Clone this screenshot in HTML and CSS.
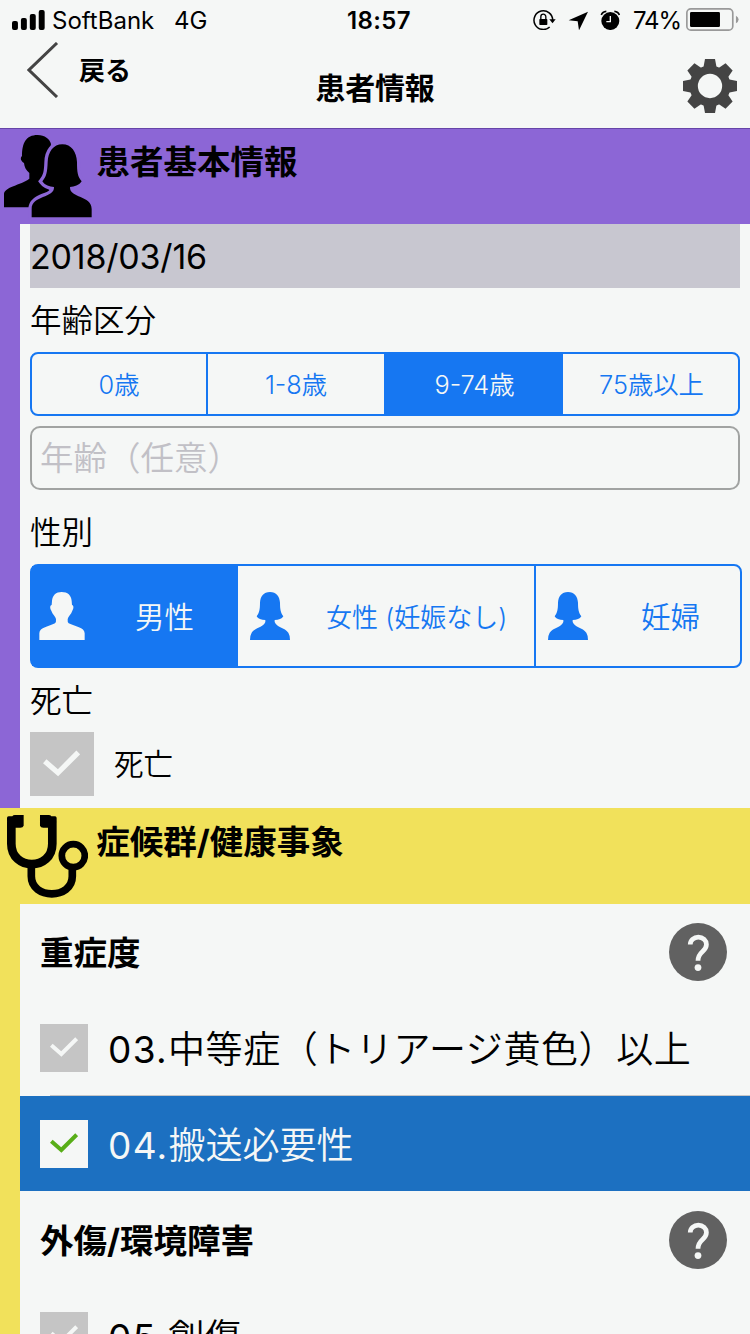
FILE: index.html
```html
<!DOCTYPE html>
<html lang="ja">
<head>
<meta charset="utf-8">
<title>患者情報</title>
<link rel="stylesheet" href="styles.css">
</head>
<body>
<svg class="defs" width="0" height="0">
  <symbol id="female" viewBox="0 0 120 144"><path d="M60 0C79 0 89 13 90 32C90 52 92 62 100 73C96 81 86 84 74 84V90C80 107 104 106 115 122Q120 130 120 144H0Q0 130 5 122C16 106 40 107 46 90V84C34 84 24 81 20 73C28 62 30 52 30 32C31 13 41 0 60 0Z"/></symbol>
  <symbol id="male" viewBox="0 0 136 144"><path d="M67 0C85 0 96 10 97 27L98 39C104 40 103 50 99 56C96 66 86 74 85 81Q84 90 88 94C106 103 136 106 136 124V144H0V124C0 106 30 103 47 94Q51 90 50 81C49 74 39 66 36 56C32 50 31 40 37 39L38 27C39 10 50 0 67 0Z"/></symbol>
  <symbol id="check" viewBox="0 0 84 60"><path d="M4 25L34 51L80 5" fill="none" stroke="currentColor" stroke-width="12"/></symbol>
  <symbol id="help" viewBox="0 0 172 172"><circle cx="86" cy="86" r="86" fill="#616161"/><path d="M63 64A24 22 0 0 1 111 64C111 86 86 84 86 112" fill="none" stroke="#f5f7f6" stroke-width="14"/><circle cx="86" cy="132" r="10" fill="#f5f7f6"/></symbol>
</svg>
<header class="top">
  <div class="status">
    <svg class="signal" viewBox="0 0 100 60"><rect y="33" width="18" height="27" rx="6"/><rect x="27" y="24" width="18" height="36" rx="6"/><rect x="54" y="12" width="18" height="48" rx="6"/><rect x="81" width="18" height="60" rx="6"/></svg>
    <span class="carrier">SoftBank</span><span class="network">4G</span>
    <span class="clock">18:57</span>
    <svg class="indicators" viewBox="0 0 264 62">
      <path d="M59 31A28 28 0 1 0 50 51" fill="none" stroke="#000" stroke-width="4.500"/><path d="M49 28H68L58.500 40Z"/><rect x="19" y="27" width="24" height="18" rx="2"/><path d="M23.500 28V20a7.500 7.500 0 0 1 15 0V28" fill="none" stroke="#000" stroke-width="4"/>
      <path d="M165 5L107 31L134 34L138 61Z"/>
      <circle cx="232" cy="33" r="27"/><path d="M232 18V35H220" fill="none" stroke="#f5f7f6" stroke-width="4"/><path d="M205 15Q208 5 220 4M244 4Q256 5 259 15" fill="none" stroke="#000" stroke-width="5"/>
    </svg>
    <span class="percent">74%</span>
    <svg class="battery" viewBox="0 0 160 70"><rect x="2.500" y="2.500" width="138" height="64" rx="12" fill="none" stroke="#999" stroke-width="5"/><rect x="12" y="12" width="90" height="45" rx="4"/><path d="M150 23Q158 28 158 34.500T150 46Z" fill="#999"/></svg>
  </div>
  <nav class="nav">
    <div class="back"><svg class="chevron" viewBox="0 0 32 56"><path d="M30 1L2 28L30 55" fill="none" stroke="#444" stroke-width="3"/></svg><span class="back-label">戻る</span></div>
    <h1 class="title">患者情報</h1>
    <svg class="gear" viewBox="-81 -81 162 162">
      <g fill="#444"><g id="teeth"><path id="tooth" d="M-15 -81H15L20 -55H-20Z"/><use href="#tooth" transform="rotate(45)"/><use href="#tooth" transform="rotate(90)"/><use href="#tooth" transform="rotate(135)"/></g><use href="#teeth" transform="rotate(180)"/></g>
      <circle r="49" fill="none" stroke="#444" stroke-width="25"/>
    </svg>
  </nav>
</header>
<main>
  <section class="section basic">
    <div class="section-head">
      <svg class="users" viewBox="0 0 264 248"><path d="M101 0C122 0 138 12 141 27L130 90L125 145L138 168L100 192L78 217H0V178C0 155 50 151 76 131V114C66 105 61 96 60 84C50 78 48 68 54 63C54 25 65 0 101 0Z"/><path class="front" d="M175 28C202 28 218 51 219 81C219 112 221 125 233 139C224 152 212 155 198 156C196 190 263 180 263 222V247H83V222C83 180 152 190 150 156C136 155 124 152 115 139C127 125 130 112 131 81C132 51 148 28 175 28Z"/></svg>
      <h2 class="section-title">患者基本情報</h2>
    </div>
    <div class="section-body">
      <div class="date">2018/03/16</div>
      <div class="label">年齢区分</div>
      <div class="ages"><span>0歳</span><span>1-8歳</span><span class="selected">9-74歳</span><span>75歳以上</span></div>
      <div class="age-input">年齢（任意）</div>
      <div class="label sex-label">性別</div>
      <div class="sexes">
        <div class="sex man selected"><svg class="sex-icon"><use href="#male"/></svg><span>男性</span></div>
        <div class="sex woman"><svg class="sex-icon"><use href="#female"/></svg><span>女性 (妊娠なし)</span></div>
        <div class="sex pregnant"><svg class="sex-icon"><use href="#female"/></svg><span>妊婦</span></div>
      </div>
      <div class="label">死亡</div>
      <div class="death"><div class="box large"><svg><use href="#check"/></svg></div><span>死亡</span></div>
    </div>
  </section>
  <section class="section syndrome">
    <div class="section-head">
      <svg class="stethoscope" viewBox="0 0 244 248"><g fill="none" stroke="#000"><path d="M13 20V86C13 168 136 168 136 86V20" stroke-width="26"/><path d="M73 152V184C73 254 196 254 196 184V150" stroke-width="23"/><circle cx="199" cy="122" r="34.500" stroke-width="20"/></g><path d="M0 20V8Q1 4 6 4H16Q18 0 24 0H50V32Q48 38 40 38H20ZM149 20V8Q148 4 143 4H133Q131 0 125 0H99V32Q101 38 109 38H130Z"/></svg>
      <h2 class="section-title">症候群/健康事象</h2>
    </div>
    <div class="section-body">
      <div class="group"><h3>重症度</h3><svg class="help"><use href="#help"/></svg></div>
      <div class="row divided"><div class="box"><svg><use href="#check"/></svg></div><span class="item wide"><span class="code">03.</span>中等症（トリアージ黄色）以上</span></div>
      <div class="row checked"><div class="box"><svg><use href="#check"/></svg></div><span class="item"><span class="code">04.</span>搬送必要性</span></div>
      <div class="group"><h3>外傷/環境障害</h3><svg class="help"><use href="#help"/></svg></div>
      <div class="row"><div class="box"><svg><use href="#check"/></svg></div><span class="item"><span class="code">05.</span>創傷</span></div>
    </div>
  </section>
</main>
</body>
</html>
```
FILE: styles.css
```css
* { box-sizing: border-box; }
body { margin: 0; width: 750px; height: 1334px; overflow: hidden; background: #f5f7f6; color: #000; font-family: Inter, "Noto Sans CJK JP", sans-serif; font-weight: 400; }
h1, h2, h3 { margin: 0; }
svg { display: block; flex: none; }
span, h1, h2, h3, .label, .date, .age-input { white-space: nowrap; }
.defs { position: absolute; }
.top { height: 128px; }
.status { height: 40px; display: flex; align-items: center; padding-left: 12px; font-size: 24px; line-height: 38px; }
.status span { padding-top: 2px; }
.signal { width: 33px; height: 20px; }
.carrier { width: 122px; padding-left: 7px; }
.network { width: 180px; padding-left: 7px; }
.clock { width: 186px; font-weight: 600; letter-spacing: 0.4px; }
.indicators { width: 88px; height: 20.700px; }
.percent { width: 65px; padding-left: 12px; letter-spacing: -1.100px; }
.battery { width: 53.300px; height: 23.300px; }
.nav { height: 88px; display: grid; grid-template-columns: 250px 250px 250px; }
.back { display: flex; padding-left: 27px; }
.chevron { width: 32px; height: 56px; margin-top: 2px; }
.back-label { padding-left: 20px; font-size: 26px; font-weight: 700; line-height: 62px; }
.title { text-align: center; font-size: 30px; line-height: 97px; letter-spacing: -0.3px; }
.gear { width: 54px; height: 54px; margin: 19px 13px 0 auto; }
.section-head { display: flex; height: 96px; }
.section-title { font-size: 33.500px; line-height: 66px; font-weight: 700; }
.section { padding-left: 20px; }
.section .section-head { margin-left: -20px; }
.section-body { background: #f5f7f6; }
.basic { background: #8c66d6; height: 680px; }
.basic .section-head { border-top: 1px solid #6645a8; }
.basic .section-body { height: 584px; padding: 0 8px 0 10px; }
.users { width: 88px; height: 82.700px; margin: 6px 4.600px 0 4px; overflow: visible; }
.front { stroke: #8c66d6; stroke-width: 20px; paint-order: stroke; }
.date { width: 710px; height: 64px; background: #c8c7d0; font-size: 34px; line-height: 65px; letter-spacing: -0.2px; font-weight: 370; }
.label { height: 64px; padding-top: 2px; font-size: 31.500px; line-height: 62px; font-weight: 350; }
.ages { width: 710px; height: 64px; display: grid; grid-template-columns: 174px 178px 179px 175px; border: 2px solid #1677f2; border-radius: 8px; color: #1677f2; font-size: 25.300px; line-height: 61px; text-align: center; font-weight: 350; }
.ages span + span { border-left: 2px solid #1677f2; }
.ages .selected + span { border-left: 0; padding-left: 2px; }
.selected { background: #1677f2; color: #f5f7f6; }
.age-input { width: 710px; height: 64px; margin-top: 10px; padding-left: 8px; border: 2px solid #a1a3a2; border-radius: 10px; color: #c1c0c6; font-size: 33.500px; line-height: 60px; font-weight: 350; }
.sex-label { margin-top: 10px; }
.sexes { width: 712px; height: 104px; display: flex; border: 2px solid #1677f2; border-radius: 8px; color: #1677f2; }
.sex { display: flex; padding-top: 26px; font-size: 29.500px; line-height: 51px; font-weight: 350; }
.sex-icon { height: 48px; fill: currentColor; }
.man { width: 206px; padding-left: 7px; }
.man .sex-icon { width: 46px; margin-right: 50px; }
.woman { width: 296px; padding-left: 12px; font-size: 26px; }
.woman .sex-icon { width: 40px; margin-right: 36px; }
.pregnant { flex: 1; padding-left: 12px; border-left: 2px solid #1677f2; }
.pregnant .sex-icon { width: 40px; margin-right: 53px; }
.death { display: flex; gap: 20px; font-size: 29.500px; line-height: 65px; font-weight: 350; }
.box { width: 48px; height: 48px; flex: none; background: #c5c5c5; color: #f5f7f6; display: flex; align-items: center; justify-content: center; }
.box svg { width: 28px; height: 20px; margin-bottom: 2px; }
.box.large { width: 64px; height: 64px; }
.box.large svg { width: 37px; height: 27px; margin-right: 2px; }
.syndrome { background: #f1e15b; }
.syndrome .section-title { line-height: 68px; }
.stethoscope { width: 81.300px; height: 82.700px; margin: 7px 8px 0 7px; }
.group { height: 96px; padding: 0 23px 0 20px; display: flex; align-items: center; justify-content: space-between; }
.group h3 { padding-top: 3px; font-size: 33.500px; line-height: 93px; font-weight: 700; }
.help { width: 58px; height: 58px; }
.row { height: 96px; padding-left: 20px; display: flex; align-items: center; gap: 20px; font-size: 37px; line-height: 93px; font-weight: 350; }
.item { padding-top: 3px; }
.wide { letter-spacing: 0.6px; }
.code { font-weight: 400; letter-spacing: 1.300px; }
.divided { background: linear-gradient(#c5c6c8, #c5c6c8) 30px 95px / 700px 1px no-repeat; }
.checked { background: linear-gradient(#1c70c1, #1c70c1) 0 0 / 100% 95px no-repeat; color: #f5f7f6; }
.checked .box { background: #f5f7f6; color: #58ae18; }
```
